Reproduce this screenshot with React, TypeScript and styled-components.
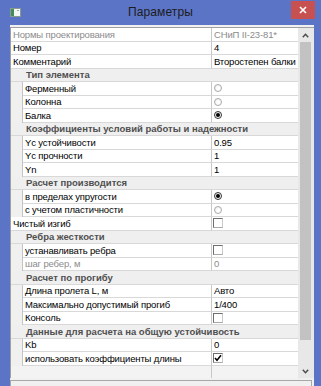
import React from "react";
import styled, { createGlobalStyle } from "styled-components";

const GlobalStyle = createGlobalStyle`
  *, *::before, *::after { box-sizing: border-box; }
  html, body { margin: 0; padding: 0; background: #5b74c6; }
  body { font-family: "Liberation Sans", Arial, sans-serif; }
`;

const Window = styled.div`
  width: 321px;
  height: 386px;
  background: #5b74c6;
  display: flex;
  flex-direction: column;
  overflow: hidden;
`;

const TitleBar = styled.div`
  height: 25px;
  flex: none;
  display: grid;
  grid-template-columns: 1fr auto 1fr;
  align-items: start;
`;

const AppIcon = styled.svg`
  margin: 8px 0 0 10px;
  display: block;
`;

const Title = styled.div`
  font-size: 12px;
  line-height: 25px;
  color: #1c1c1c;
  letter-spacing: 0.1px;
`;

const CloseButton = styled.div`
  justify-self: end;
  margin: 1px 6px 0 0;
  width: 24px;
  height: 18px;
  background: #c75050;
  display: flex;
  align-items: center;
  justify-content: center;
`;

const Body = styled.div`
  flex: 1;
  margin: 0 7px 0 10px;
  padding-top: 2px;
  background: #f0f0f0;
  display: flex;
  flex-direction: column;
  gap: 2px;
`;

const Grid = styled.div`
  height: 351px;
  flex: none;
  display: flex;
  border-top: 1px solid #a0a0a0;
  border-left: 1px solid #a0a0a0;
`;

const RowsArea = styled.div`
  width: 287px;
  display: flex;
  flex-direction: column;
  background: linear-gradient(
      to right,
      transparent 200px,
      #c8c8c8 200px,
      #c8c8c8 201px,
      transparent 201px
    ),
    #f3f3f3;
`;

const Row = styled.div`
  height: 13.5px;
  flex: none;
  display: flex;
  font-size: 9.5px;
  letter-spacing: -0.15px;
`;

const NameCell = styled.div`
  width: 200px;
  flex: none;
  display: flex;
`;

const Indent = styled.div`
  width: 12px;
  flex: none;
  background: #f0f0f0;
  border-right: 1px solid #c4c4c4;
`;

const Cell = styled.div<{ $muted?: boolean }>`
  flex: 1;
  min-width: 0;
  padding-left: 2px;
  background: #fff;
  border-bottom: 1px solid #d8d8d8;
  color: ${(p) => (p.$muted ? "#8c8c8c" : "#000")};
  display: flex;
  align-items: center;
  white-space: nowrap;
  overflow: hidden;
`;

const ValueCell = styled(Cell)`
  border-left: 1px solid #c8c8c8;
`;

const Category = styled.div`
  height: 13.5px;
  flex: none;
  padding-left: 15px;
  background: #efefef;
  border-bottom: 1px solid #d8d8d8;
  font-size: 9.5px;
  font-weight: bold;
  color: #4f4f4f;
  display: flex;
  align-items: center;
  white-space: nowrap;
`;

const Radio = styled.span<{ $on?: boolean }>`
  width: 8px;
  height: 8px;
  border-radius: 50%;
  border: 1px solid ${(p) => (p.$on ? "#333" : "#aaa")};
  background: radial-gradient(circle at 60% 60%, #fff 30%, #e2e2e2 100%);
  display: flex;
  align-items: center;
  justify-content: center;
  &::after {
    content: "";
    width: 4px;
    height: 4px;
    border-radius: 50%;
    background: ${(p) => (p.$on ? "#000" : "transparent")};
  }
`;

const Check = styled.span`
  width: 10px;
  height: 10px;
  margin-left: -1px;
  background: #fff;
  border: 1px solid #6e6e6e;
  border-right-color: #c8c8c8;
  border-bottom-color: #a8a8a8;
  display: flex;
  align-items: center;
  justify-content: center;
`;

const Scrollbar = styled.div`
  width: 16px;
  flex: none;
  background: #e8e8e8;
  display: flex;
  flex-direction: column;
`;

const ScrollButton = styled.div`
  height: 14px;
  flex: none;
  display: flex;
  align-items: center;
  justify-content: center;
  padding-right: 1px;
`;

const Thumb = styled.div`
  height: 298px;
  flex: none;
  margin: 0 3px 0 2px;
  background: #c2c2c2;
`;

const Track = styled.div`
  flex: 1;
`;

const DescriptionBox = styled.div`
  flex: 1;
  margin-right: 2px;
  border: 1px solid #a8a8a8;
  border-bottom: none;
  background: #f0f0f0;
`;

type Item =
  | { kind: "cat"; label: string }
  | {
      kind: "prop";
      label: string;
      nested?: boolean;
      muted?: boolean;
      value?: string;
      radio?: boolean;
      check?: boolean;
    };

const items: Item[] = [
  { kind: "prop", label: "Нормы проектирования", value: "СНиП II-23-81*", muted: true },
  { kind: "prop", label: "Номер", value: "4" },
  { kind: "prop", label: "Комментарий", value: "Второстепен балки" },
  { kind: "cat", label: "Тип элемента" },
  { kind: "prop", label: "Ферменный", nested: true, radio: false },
  { kind: "prop", label: "Колонна", nested: true, radio: false },
  { kind: "prop", label: "Балка", nested: true, radio: true },
  { kind: "cat", label: "Коэффициенты условий работы и надежности" },
  { kind: "prop", label: "Yc устойчивости", nested: true, value: "0.95" },
  { kind: "prop", label: "Yc прочности", nested: true, value: "1" },
  { kind: "prop", label: "Yn", nested: true, value: "1" },
  { kind: "cat", label: "Расчет производится" },
  { kind: "prop", label: "в пределах упругости", nested: true, radio: true },
  { kind: "prop", label: "с учетом пластичности", nested: true, radio: false },
  { kind: "prop", label: "Чистый изгиб", check: false },
  { kind: "cat", label: "Ребра жесткости" },
  { kind: "prop", label: "устанавливать ребра", nested: true, check: false },
  { kind: "prop", label: "шаг ребер, м", nested: true, value: "0", muted: true },
  { kind: "cat", label: "Расчет по прогибу" },
  { kind: "prop", label: "Длина пролета L, м", nested: true, value: "Авто" },
  { kind: "prop", label: "Максимально допустимый прогиб", nested: true, value: "1/400" },
  { kind: "prop", label: "Консоль", nested: true, check: false },
  { kind: "cat", label: "Данные для расчета на общую устойчивость" },
  { kind: "prop", label: "Kb", nested: true, value: "0" },
  { kind: "prop", label: "использовать коэффициенты длины", nested: true, check: true },
];

const Chevron = ({ up }: { up?: boolean }) => (
  <svg width="7" height="5" viewBox="0 0 7 5">
    <path
      d={up ? "M0.8 4.2 L3.5 1.2 L6.2 4.2" : "M0.8 0.8 L3.5 3.8 L6.2 0.8"}
      fill="none"
      stroke="#4a4a4a"
      strokeWidth="1.4"
    />
  </svg>
);

const renderValue = (item: Extract<Item, { kind: "prop" }>) => {
  if (item.radio !== undefined) return <Radio $on={item.radio} />;
  if (item.check !== undefined)
    return (
      <Check>
        {item.check && (
          <svg width="8" height="8" viewBox="0 0 8 8">
            <path d="M1 4 L3 6.3 L7 1.3" fill="none" stroke="#000" strokeWidth="1.5" />
          </svg>
        )}
      </Check>
    );
  return item.value;
};

const App = () => {
  return (
    <>
      <GlobalStyle />
      <Window>
        <TitleBar>
          <AppIcon width="11" height="9" viewBox="0 0 11 9">
            <rect x="0.5" y="0.5" width="10" height="8" fill="#f4f7f4" stroke="#8a9a8e" />
            <rect x="1" y="1" width="3" height="7" fill="#3f8f5a" />
            <rect x="7" y="2" width="2" height="1" fill="#9ab" />
          </AppIcon>
          <Title>Параметры</Title>
          <CloseButton>
            <svg width="8" height="8" viewBox="0 0 8 8">
              <path d="M1 1 L7 7 M7 1 L1 7" stroke="#fff" strokeWidth="1.6" />
            </svg>
          </CloseButton>
        </TitleBar>
        <Body>
          <Grid>
            <RowsArea>
              {items.map((item, i) =>
                item.kind === "cat" ? (
                  <Category key={i}>{item.label}</Category>
                ) : (
                  <Row key={i}>
                    <NameCell>
                      {item.nested && <Indent />}
                      <Cell $muted={item.muted}>{item.label}</Cell>
                    </NameCell>
                    <ValueCell $muted={item.muted}>{renderValue(item)}</ValueCell>
                  </Row>
                )
              )}
            </RowsArea>
            <Scrollbar>
              <ScrollButton>
                <Chevron up />
              </ScrollButton>
              <Thumb />
              <Track />
              <ScrollButton>
                <Chevron />
              </ScrollButton>
            </Scrollbar>
          </Grid>
          <DescriptionBox />
        </Body>
      </Window>
    </>
  );
};

export default App;
